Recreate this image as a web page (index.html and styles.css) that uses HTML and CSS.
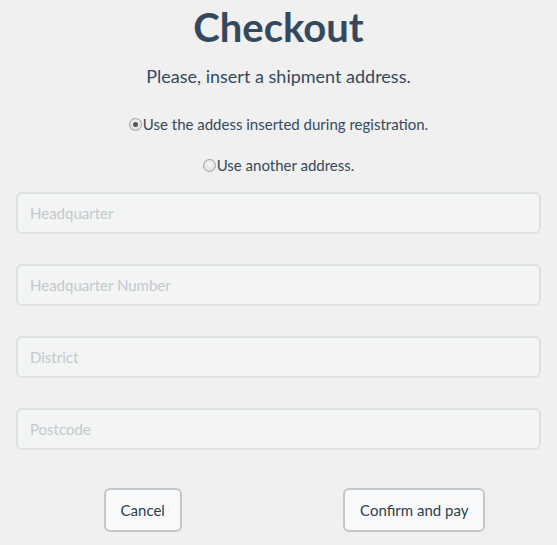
FILE: index.html
```html
<!DOCTYPE html>
<html>
<head>
<meta charset="utf-8">
<link rel="stylesheet" href="styles.css">
</head>
<body>
<div class="page">
  <h1 class="title">Checkout</h1>
  <p class="subtitle">Please, insert a shipment address.</p>
  <div class="choice"><label><input class="radio" type="radio" name="addr" checked>Use the addess inserted during registration.</label></div>
  <div class="choice"><label><input class="radio" type="radio" name="addr">Use another address.</label></div>
  <form class="fields">
    <input class="field" type="text" placeholder="Headquarter">
    <input class="field" type="text" placeholder="Headquarter Number">
    <input class="field" type="text" placeholder="District">
    <input class="field" type="text" placeholder="Postcode">
  </form>
  <div class="actions">
    <button class="btn">Cancel</button>
    <button class="btn">Confirm and pay</button>
  </div>
</div>
</body>
</html>
```
FILE: styles.css
```css
html, body {
  margin: 0;
  padding: 0;
  background: #f0f0f0;
}
body {
  font-family: Lato, "Open Sans", sans-serif;
  color: #34495e;
}
.page {
  padding: 0 16px;
}
.title {
  margin: 0;
  padding-top: 3px;
  font-size: 40px;
  font-weight: 700;
  line-height: 48px;
  text-align: center;
  color: #34495e;
}
.subtitle {
  margin: 13px 0 0;
  font-size: 18px;
  line-height: 24px;
  text-align: center;
}
.choice {
  margin-top: 24px;
  font-size: 15px;
  line-height: 24px;
  text-align: center;
}
.choice + .choice {
  margin-top: 17px;
}
.radio {
  appearance: none;
  -webkit-appearance: none;
  box-sizing: border-box;
  margin: 0 1px 0 0;
  width: 13px;
  height: 13px;
  border: 1px solid #a0a0a0;
  border-radius: 50%;
  background: radial-gradient(circle at 50% 40%, #f6f6f6 0%, #d8d8d8 100%);
  vertical-align: -1px;
  position: relative;
}
.radio:checked::after {
  content: "";
  position: absolute;
  left: 3px;
  top: 3px;
  width: 5px;
  height: 5px;
  border-radius: 50%;
  background: #555;
}
.fields {
  margin-top: 15px;
  display: flex;
  flex-direction: column;
  gap: 30px;
}
.field {
  box-sizing: border-box;
  width: 100%;
  height: 42px;
  margin: 0;
  padding: 0 12px;
  border: 2px solid #dde1e0;
  border-radius: 6px;
  background: #f3f4f4;
  font-family: Lato, sans-serif;
  font-size: 15px;
  color: #34495e;
  outline: none;
}
.field::placeholder {
  color: #c3c9cf;
}
.actions {
  margin: 38px -9px 0;
  display: grid;
  grid-template-columns: 1fr 1fr;
  justify-items: center;
}
.btn {
  box-sizing: border-box;
  height: 44px;
  padding: 0 15px;
  border: 2px solid #c4c7ca;
  border-radius: 6px;
  background: #f8f9fa;
  font-family: Lato, sans-serif;
  font-size: 15px;
  color: #2c3e50;
}
```
